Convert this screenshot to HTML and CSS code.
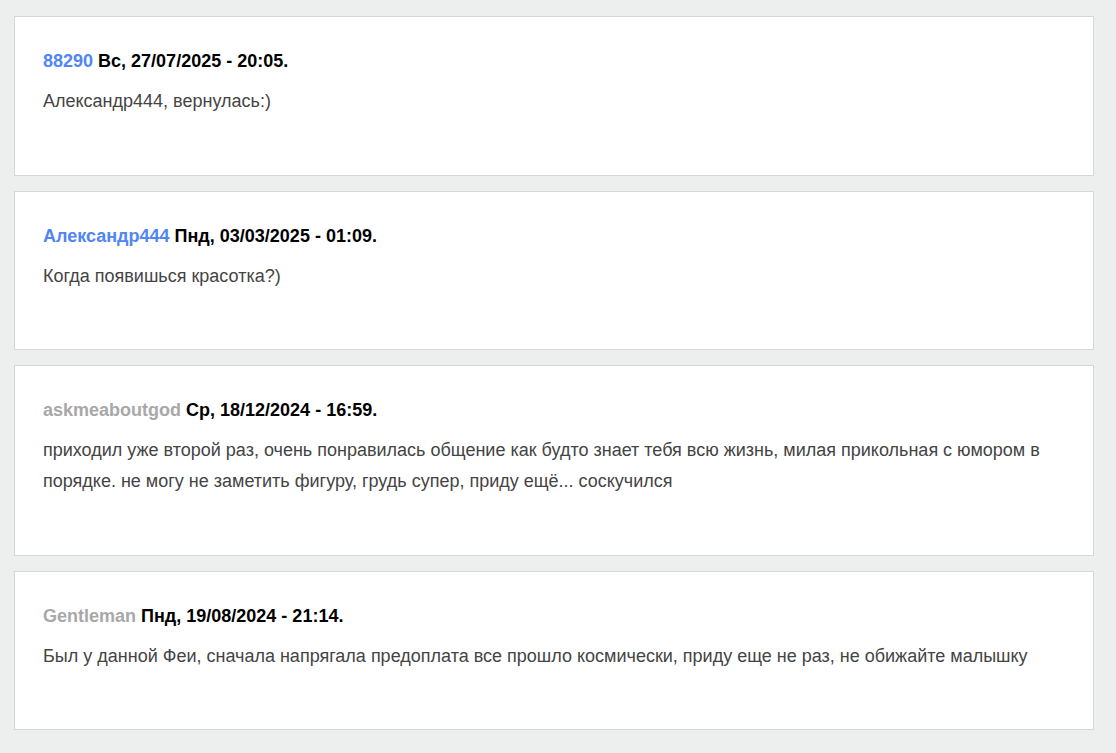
FILE: index.html
```html
<!DOCTYPE html>
<html lang="ru">
<head>
<meta charset="utf-8">
<title>Отзывы</title>
<link rel="stylesheet" href="styles.css">
</head>
<body>
<div class="list">
  <div class="comment">
    <div class="meta"><a class="author" href="#">88290</a> <span class="date">Вс, 27/07/2025 - 20:05.</span></div>
    <p class="text">Александр444, вернулась:)</p>
  </div>
  <div class="comment">
    <div class="meta"><a class="author" href="#">Александр444</a> <span class="date">Пнд, 03/03/2025 - 01:09.</span></div>
    <p class="text">Когда появишься красотка?)</p>
  </div>
  <div class="comment">
    <div class="meta"><span class="author guest">askmeaboutgod</span> <span class="date">Ср, 18/12/2024 - 16:59.</span></div>
    <p class="text">приходил уже второй раз, очень понравилась общение как будто знает тебя всю жизнь, милая прикольная с юмором в порядке. не могу не заметить фигуру, грудь супер, приду ещё... соскучился</p>
  </div>
  <div class="comment">
    <div class="meta"><span class="author guest">Gentleman</span> <span class="date">Пнд, 19/08/2024 - 21:14.</span></div>
    <p class="text">Был у данной Феи, сначала напрягала предоплата все прошло космически, приду еще не раз, не обижайте малышку</p>
  </div>
</div>
</body>
</html>
```
FILE: styles.css
```css
html, body {
  margin: 0;
  padding: 0;
}
body {
  background: #ecefee;
  font-family: "Liberation Sans", Arial, sans-serif;
  font-size: 18px;
}
.list {
  display: flex;
  flex-direction: column;
  gap: 15px;
  padding: 16px 22px 16px 14px;
}
.comment {
  background: #ffffff;
  border: 1px solid #d6d8d8;
  padding: 29px 28px 27.6px 28px;
}
.meta {
  line-height: 30px;
  font-weight: bold;
  color: #000;
}
.author {
  color: #4f85f6;
  text-decoration: none;
}
.author.guest {
  color: #a8a8a8;
}
.text {
  margin: 10px 0 30px 0;
  line-height: 31px;
  color: #444;
}
```
